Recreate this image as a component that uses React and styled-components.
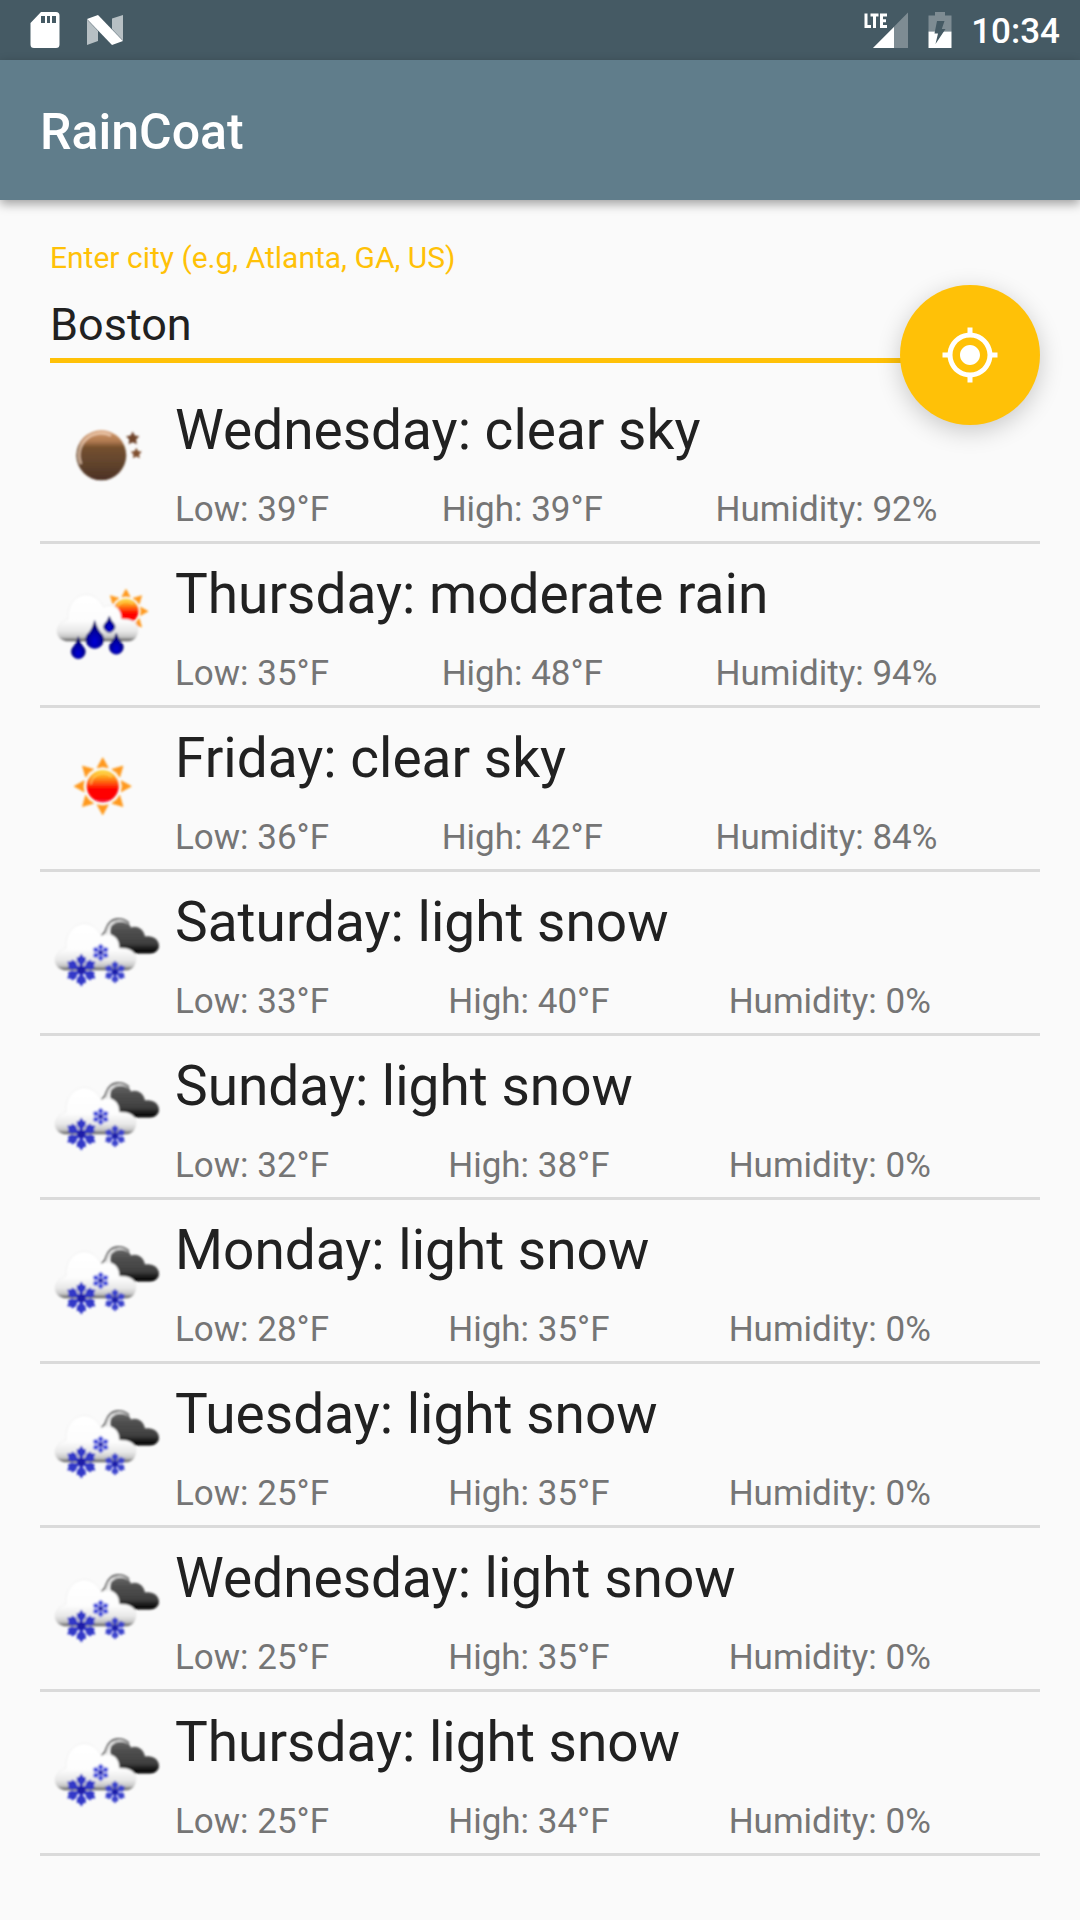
import React from "react";
import styled, { createGlobalStyle } from "styled-components";

const GlobalStyle = createGlobalStyle`
  *, *::before, *::after { box-sizing: border-box; }
  body {
    margin: 0;
    background: #fafafa;
    font-family: Roboto, "Noto Sans", sans-serif;
  }
`;

const Page = styled.div`
  min-height: 100vh;
  background: #fafafa;
  color: #212121;
`;

const StatusBar = styled.div`
  display: flex;
  justify-content: space-between;
  align-items: center;
  height: 60px;
  padding: 0 20px 0 30px;
  background: #455a64;
  color: #ffffff;
`;

const StatusGroup = styled.div`
  display: flex;
  align-items: center;
  gap: ${(p) => p.$gap}px;
`;

const Clock = styled.time`
  padding-top: 4px;
  font-size: 35px;
  line-height: 42px;
  font-weight: 500;
`;

const AppBar = styled.header`
  position: relative;
  display: flex;
  align-items: center;
  height: 140px;
  padding: 4px 40px 0;
  background: #607d8b;
  box-shadow: 0 4px 10px rgba(0, 0, 0, 0.36);
`;

const AppTitle = styled.h1`
  margin: 0;
  color: #ffffff;
  font-size: 50px;
  line-height: 60px;
  font-weight: 500;
`;

const Content = styled.main`
  position: relative;
  padding: 40px 40px 0;
`;

const CityField = styled.div`
  display: flex;
  flex-direction: column;
  gap: 22px;
  margin: 0 10px 17px;
`;

const CityLabel = styled.label`
  color: #ffc107;
  font-size: 30px;
  line-height: 36px;
`;

const CityInput = styled.input`
  width: 100%;
  height: 65px;
  padding: 0 0 8px;
  border: 0;
  border-bottom: 5px solid #ffc107;
  border-radius: 0;
  outline: none;
  background: transparent;
  color: #212121;
  font-family: inherit;
  font-size: 45px;
  line-height: 52px;
`;

const LocateButton = styled.button`
  position: absolute;
  top: 85px;
  right: 40px;
  display: grid;
  place-items: center;
  width: 140px;
  height: 140px;
  padding: 0;
  border: 0;
  border-radius: 50%;
  background: #ffc107;
  box-shadow: 0 6px 24px rgba(0, 0, 0, 0.2);
`;

const Forecast = styled.ul`
  margin: 0;
  padding: 0;
  list-style: none;
`;

const Day = styled.li`
  display: flex;
  gap: 10px;
  height: 164px;
  padding-top: 16px;
  border-bottom: 3px solid #dadada;
`;

const DayText = styled.div`
  flex: 1;
  padding-top: 2px;
`;

const DayTitle = styled.h2`
  margin: 0 0 27px;
  font-size: 55px;
  line-height: 64px;
  font-weight: 400;
  white-space: nowrap;
`;

const Readings = styled.div`
  display: flex;
  gap: 10px;
`;

const Reading = styled.span`
  flex: 1 0 auto;
  color: #757575;
  font-size: 35px;
  line-height: 41px;
  white-space: nowrap;
`;

const SdCardIcon = () => (
  <svg width="30" height="36" viewBox="0 0 30 36" aria-hidden="true">
    <path
      fill="#fff"
      fillRule="evenodd"
      d="M11 0H26Q29.500 0 29.500 3.500V32.500Q29.500 36 26 36H4Q0.500 36 0.500 32.500V11ZM11 4V11H15V4ZM17 4V11H20V4ZM22 4V11H26V4Z"
    />
  </svg>
);

const NougatIcon = () => (
  <svg width="36" height="30" viewBox="0 0 36 30" aria-hidden="true">
    <path fill="#b7c0c4" d="M0 4.500L11 16V26L0 30ZM25 3.500L36 0V25.500L25 14Z" />
    <path fill="#fff" d="M0 4L11 0L36 26L25 30Z" />
  </svg>
);

const SignalIcon = () => (
  <svg width="45" height="36" viewBox="0 0 45 36" aria-hidden="true">
    <path fill="#7e8c93" d="M44 0.500V36H9Z" />
    <path fill="#fff" d="M30 15V36H9Z" />
    <path
      fill="none"
      stroke="#fff"
      strokeWidth="3"
      d="M2 1.500V16M1.500 14.500H7M6.500 3H14.500M10.500 3V16M17.500 1.500V16M17 3H23M17 8.700H22M17 14.500H23"
    />
  </svg>
);

const BatteryIcon = () => (
  <svg width="24" height="36" viewBox="0 0 24 36" aria-hidden="true">
    <path fill="#7e8c93" d="M7 0H17V3.500H23.500V19.500H0.500V3.500H7Z" />
    <path fill="#fff" d="M0.500 19.500H23.500V36H0.500Z" />
    <path fill="#455a64" d="M9 9H16.500L13.800 17H17.500L7.500 32L10 21.500H6.500Z" />
  </svg>
);

const LocateIcon = () => (
  <svg width="60" height="60" viewBox="0 0 24 24" aria-hidden="true">
    <path
      fill="#fff"
      d="M12 8c-2.210 0-4 1.790-4 4s1.790 4 4 4 4-1.790 4-4-1.790-4-4-4zm8.940 3c-.46-4.170-3.770-7.480-7.940-7.940V1h-2v2.060C6.830 3.520 3.520 6.830 3.060 11H1v2h2.060c.46 4.170 3.770 7.480 7.940 7.940V23h2v-2.060c4.170-.46 7.480-3.770 7.940-7.940H23v-2h-2.060zM12 19c-3.870 0-7-3.130-7-7s3.130-7 7-7 7 3.130 7 7-3.130 7-7 7z"
    />
  </svg>
);

const HiddenDefs = styled.svg`
  display: block;
`;

const IconDefs = () => (
  <HiddenDefs width="0" height="0" aria-hidden="true">
    <defs>
      <linearGradient id="moonFill" x1="0" y1="0" x2="0" y2="1">
        <stop offset="0" stopColor="#d59a6c" />
        <stop offset="0.220" stopColor="#b07a50" />
        <stop offset="0.340" stopColor="#75502f" />
        <stop offset="0.700" stopColor="#5f422c" />
        <stop offset="1" stopColor="#4b3023" />
      </linearGradient>
      <linearGradient id="sunFill" x1="0" y1="0" x2="0" y2="1">
        <stop offset="0" stopColor="#ffd21c" />
        <stop offset="0.200" stopColor="#ffa41c" />
        <stop offset="0.420" stopColor="#ff4a0c" />
        <stop offset="0.580" stopColor="#ff0500" />
        <stop offset="0.850" stopColor="#ff0000" />
        <stop offset="1" stopColor="#f4103c" />
      </linearGradient>
      <linearGradient id="cloudFill" x1="0" y1="0" x2="0" y2="1">
        <stop offset="0" stopColor="#ffffff" />
        <stop offset="0.550" stopColor="#fdfdfd" />
        <stop offset="0.780" stopColor="#e8e8e8" />
        <stop offset="0.900" stopColor="#c8c8c8" />
        <stop offset="1" stopColor="#4c4c4c" />
      </linearGradient>
      <linearGradient id="darkCloudFill" x1="0" y1="0" x2="0" y2="1">
        <stop offset="0" stopColor="#6a6a6a" />
        <stop offset="0.300" stopColor="#505050" />
        <stop offset="0.700" stopColor="#404040" />
        <stop offset="0.880" stopColor="#141414" />
        <stop offset="1" stopColor="#000000" />
      </linearGradient>
      <radialGradient id="dropFill" cx="0.500" cy="0.750" r="0.600">
        <stop offset="0" stopColor="#0000d8" />
        <stop offset="0.500" stopColor="#0000a8" />
        <stop offset="1" stopColor="#000062" />
      </radialGradient>
      <filter id="soft" x="-10%" y="-10%" width="120%" height="120%">
        <feGaussianBlur stdDeviation="0.800" />
      </filter>
    </defs>
  </HiddenDefs>
);

const WeatherSvg = styled.svg`
  flex: none;
  width: 125px;
  height: 125px;
`;

const Sun = ({ x, y, r }) => (
  <g transform={`translate(${x} ${y}) scale(${r / 16})`}>
    {[0, 45, 90, 135, 180, 225, 270, 315].map((a) => (
      <path
        key={a}
        transform={`rotate(${a})`}
        fill="#ff981a"
        stroke="#ff981a"
        strokeWidth="0.800"
        d="M0 -28.500L5.500 -18.500Q0 -20.500 -5.500 -18.500Z"
      />
    ))}
    <circle r="16" fill="url(#sunFill)" />
    <path
      d="M-12 -2A12.500 12.500 0 0 1 9 -9.500"
      fill="none"
      stroke="#ffe27a"
      strokeWidth="2"
      opacity="0.550"
    />
  </g>
);

const Cloud = ({ dy = 0, dx = 0 }) => (
  <path
    transform={`translate(${dx} ${dy})`}
    fill="url(#cloudFill)"
    stroke="#e8e8e8"
    strokeWidth="0.600"
    d="M27 81.500C14 80 13 64 28 59C27 40 40 34 47 34.500C56 35 61 42 63.500 47C74 42 82 50 81 59C91 59 98 62 98 70C98 77 94 81.500 88 81.500Z"
  />
);

const Drop = ({ x, y, r, tip }) => (
  <path
    fill="url(#dropFill)"
    stroke="#00006c"
    strokeWidth="0.600"
    d={`M${x} ${tip}Q${x + r * 0.3} ${y - r * 0.9} ${x + r * 0.85} ${y - r * 0.4}A${r} ${r} 0 1 1 ${x - r * 0.85} ${y - r * 0.4}Q${x - r * 0.3} ${y - r * 0.9} ${x} ${tip}Z`}
  />
);

const Flake = ({ x, y, r, color }) => (
  <g transform={`translate(${x} ${y}) scale(${r / 14})`}>
    {[0, 60, 120, 180, 240, 300].map((a) => (
      <path
        key={a}
        transform={`rotate(${a})`}
        fill={color}
        d="M-1.500 0L-1.600 -5L-4 -8L-4.200 -12L-2.200 -12L0 -15L2.200 -12L4.200 -12L4 -8L1.600 -5L1.500 0Z"
      />
    ))}
    <circle r="3.800" fill="#1c1ca8" />
  </g>
);

const star = (cx, cy, r) =>
  Array.from({ length: 10 }, (_, i) => {
    const rad = i % 2 ? r * 0.52 : r;
    const a = (Math.PI / 5) * i - Math.PI / 2;
    return `${cx + rad * Math.cos(a)},${cy + rad * Math.sin(a)}`;
  }).join(" ");

const drawings = {
  night: (
    <>
      <circle cx="61.300" cy="59.300" r="25" fill="url(#moonFill)" />
      <path
        d="M41 68A22 22 0 0 1 71 39.500"
        fill="none"
        stroke="#f6d8c2"
        strokeWidth="2.600"
        opacity="0.700"
      />
      <polygon points={star(92.7, 42.5, 7)} fill="#70442c" />
      <polygon points={star(96.3, 57.5, 5.8)} fill="#80502f" />
    </>
  ),
  rain: (
    <>
      <Sun x={86} y={51.3} r={12.4} />
      <Cloud />
      <Drop x={69.3} y={66} r={5.5} tip={56} />
      <Drop x={54.7} y={78.3} r={9} tip={60.5} />
      <Drop x={38.3} y={90.8} r={7} tip={76.5} />
      <Drop x={76.3} y={86.3} r={7} tip={73} />
    </>
  ),
  sun: <Sun x={62.7} y={62.3} r={16} />,
  snow: (
    <>
      <path
        fill="url(#darkCloudFill)"
        d="M72 52C69 42 70 34 78 32C85 31 89 35 91 39.500C98 37 104 42 105 48.500C112 47 119 51 119 57.500C119 62 115 65.500 110 65.500H84Z"
      />
      <path
        d="M67 50Q66 37 78 33Q84 32 88 35"
        fill="none"
        stroke="#e0e0e0"
        strokeWidth="1.800"
      />
      <path
        d="M60 48Q65 46 66 41Q69 32 77 31Q84 30.500 89 35"
        fill="none"
        stroke="#6c6c6c"
        strokeWidth="1.800"
      />
      <Cloud dx={-2} dy={1} />
      <Flake x={60.7} y={64.500} r={8.5} color="#3f49dc" />
      <Flake x={41.3} y={82} r={15.3} color="#3038c8" />
      <Flake x={75} y={84} r={10.8} color="#3b43cc" />
    </>
  ),
};

const WeatherIcon = ({ kind, label }) => (
  <WeatherSvg viewBox="0 0 125 125" role="img" aria-label={label}>
    <g filter="url(#soft)">{drawings[kind]}</g>
  </WeatherSvg>
);

const days = [
  { day: "Wednesday", sky: "clear sky", icon: "night", low: 39, high: 39, humidity: 92 },
  { day: "Thursday", sky: "moderate rain", icon: "rain", low: 35, high: 48, humidity: 94 },
  { day: "Friday", sky: "clear sky", icon: "sun", low: 36, high: 42, humidity: 84 },
  { day: "Saturday", sky: "light snow", icon: "snow", low: 33, high: 40, humidity: 0 },
  { day: "Sunday", sky: "light snow", icon: "snow", low: 32, high: 38, humidity: 0 },
  { day: "Monday", sky: "light snow", icon: "snow", low: 28, high: 35, humidity: 0 },
  { day: "Tuesday", sky: "light snow", icon: "snow", low: 25, high: 35, humidity: 0 },
  { day: "Wednesday", sky: "light snow", icon: "snow", low: 25, high: 35, humidity: 0 },
  { day: "Thursday", sky: "light snow", icon: "snow", low: 25, high: 34, humidity: 0 },
];

export default function App() {
  return (
    <Page>
      <GlobalStyle />
      <StatusBar>
        <StatusGroup $gap={27}>
          <SdCardIcon />
          <NougatIcon />
        </StatusGroup>
        <StatusGroup $gap={19}>
          <SignalIcon />
          <BatteryIcon />
          <Clock>10:34</Clock>
        </StatusGroup>
      </StatusBar>
      <AppBar>
        <AppTitle>RainCoat</AppTitle>
      </AppBar>
      <Content>
        <IconDefs />
        <CityField>
          <CityLabel htmlFor="city">Enter city (e.g, Atlanta, GA, US)</CityLabel>
          <CityInput id="city" type="text" defaultValue="Boston" />
        </CityField>
        <Forecast>
          {days.map((d, i) => (
            <Day key={i}>
              <WeatherIcon kind={d.icon} label={d.sky} />
              <DayText>
                <DayTitle>{`${d.day}: ${d.sky}`}</DayTitle>
                <Readings>
                  <Reading>{`Low: ${d.low}°F`}</Reading>
                  <Reading>{`High: ${d.high}°F`}</Reading>
                  <Reading>{`Humidity: ${d.humidity}%`}</Reading>
                </Readings>
              </DayText>
            </Day>
          ))}
        </Forecast>
        <LocateButton type="button" aria-label="Use my location">
          <LocateIcon />
        </LocateButton>
      </Content>
    </Page>
  );
}
